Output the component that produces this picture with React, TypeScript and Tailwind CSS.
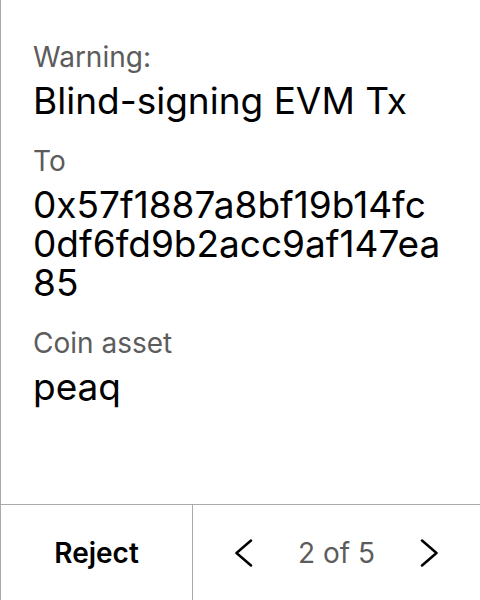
import React from "react";

const Field = ({ label, value }: { label: string; value: string }) => (
  <div className="flex flex-col gap-[7px]">
    <div className="text-[28px] leading-[34px] text-[#5c5c5c]">{label}</div>
    <div className="w-[410px] text-[37px] leading-[39px] text-black break-all">{value}</div>
  </div>
);

const Chevron = ({ dir }: { dir: "left" | "right" }) => (
  <svg width="18" height="28" viewBox="0 0 18 28" fill="none" stroke="black" strokeWidth="2.5" strokeLinecap="round" strokeLinejoin="round">
    {dir === "left" ? <polyline points="16,1.5 1.5,14 16,26.5" /> : <polyline points="2,1.5 16.5,14 2,26.5" />}
  </svg>
);

export default function App() {
  return (
    <div className="w-[480px] h-[600px] bg-white border-l border-[#aaaaaa] flex flex-col font-['Inter',sans-serif]">
      <div className="flex-1 flex flex-col gap-[24px] pl-[32px] pt-[40px]">
        <Field label="Warning:" value="Blind-signing EVM Tx" />
        <Field label="To" value="0x57f1887a8bf19b14fc0df6fd9b2acc9af147ea85" />
        <Field label="Coin asset" value="peaq" />
      </div>
      <div className="h-[96px] border-t border-[#aaaaaa] flex">
        <button className="w-[192px] border-r border-[#aaaaaa] flex items-center justify-center text-[28px] font-semibold text-black">
          Reject
        </button>
        <div className="flex-1 flex items-center justify-between px-[42px]">
          <Chevron dir="left" />
          <span className="text-[28px] text-[#5c5c5c]">2 of 5</span>
          <Chevron dir="right" />
        </div>
      </div>
    </div>
  );
}
